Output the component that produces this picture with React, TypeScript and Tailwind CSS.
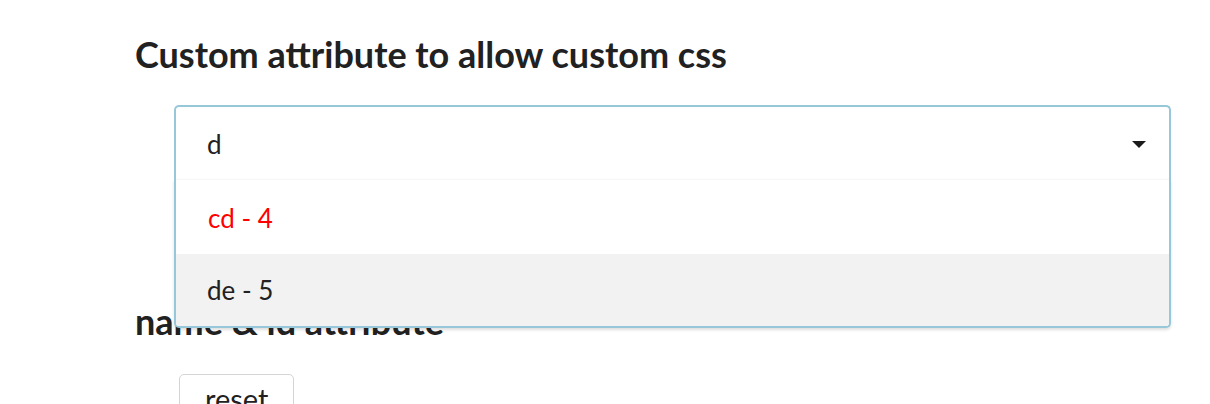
import React from "react";

export default function App() {
  return (
    <div className="h-[404px] overflow-hidden bg-white text-[#212121] font-['Lato','Liberation_Sans',sans-serif]">
      <div className="pl-[135px] pt-[36px]">
        <h2 className="text-[36px] font-bold leading-none">Custom attribute to allow custom css</h2>
      </div>

      <div className="pl-[174px] pr-[39px] mt-[33px]">
        <div className="relative z-10">
          <div className="h-[74px] flex items-center justify-between border-2 border-b-0 border-[#96c8da] rounded-t-[5px] pl-[31px] pr-[23px] pt-[2px] bg-white">
            <span className="text-[26px] leading-none">d</span>
            <svg width="14" height="7" viewBox="0 0 14 7" className="text-[#1b1b1b]">
              <path d="M0 0 H14 L7 7 Z" fill="currentColor" />
            </svg>
          </div>
          <div className="absolute left-0 right-0 top-full border-2 border-t-0 border-[#96c8da] rounded-b-[5px] bg-white shadow-[0_2px_3px_rgba(34,36,38,0.15)] overflow-hidden">
            <div className="h-[1px] bg-[#f7f7f7]" />
            <div className="h-[74px] flex items-center pl-[32px] pt-[2px] text-[26px] leading-none text-[#ff0000]">cd - 4</div>
            <div className="h-[72px] flex items-center pl-[31px] text-[26px] leading-none bg-[#f2f2f2]">de - 5</div>
          </div>
        </div>
      </div>

      <div className="pl-[135px] mt-[124px]">
        <h3 className="text-[36px] font-bold leading-none">name &amp; id attribute</h3>
        <button className="mt-[35px] ml-[44px] h-[50px] px-[25px] border border-[#d4d4d5] rounded-[5px] bg-white text-[29px] leading-none pt-[9px] items-start flex">
          reset
        </button>
      </div>
    </div>
  );
}
